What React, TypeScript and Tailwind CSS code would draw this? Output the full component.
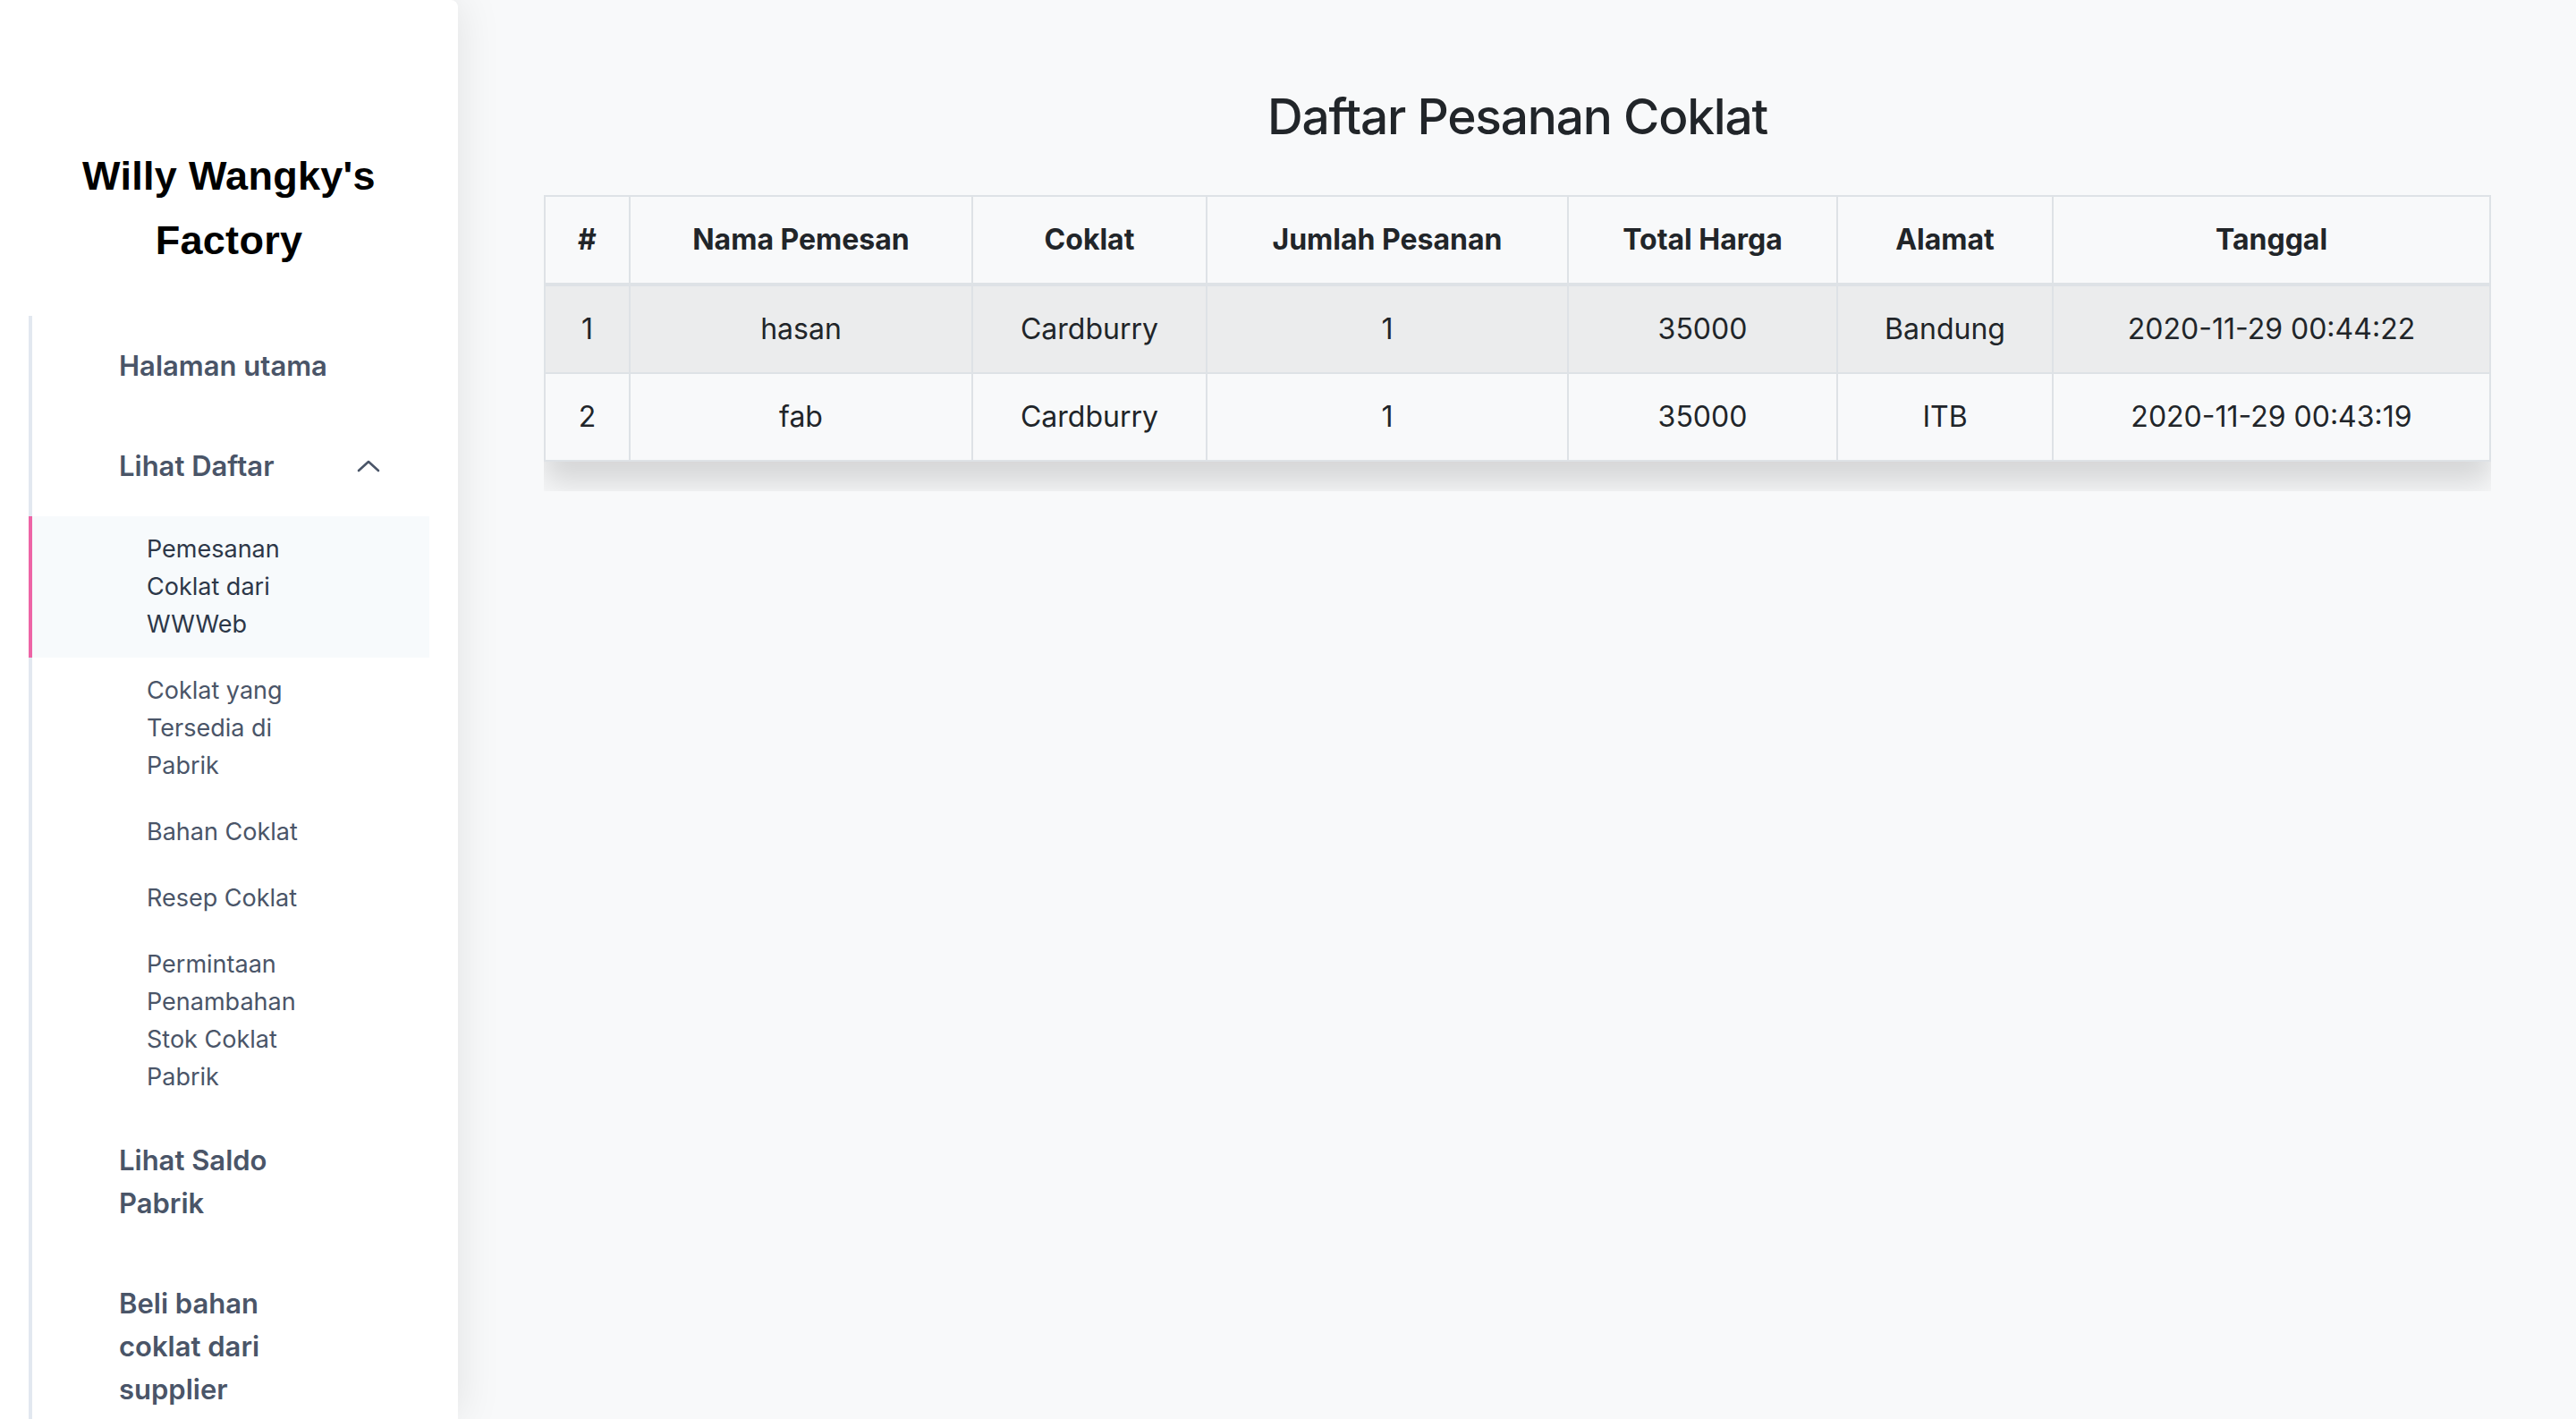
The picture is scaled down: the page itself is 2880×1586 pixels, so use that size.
import React from "react";

const NAV_SUB = [
  { label: "Pemesanan Coklat dari WWWeb", active: true },
  { label: "Coklat yang Tersedia di Pabrik", active: false },
  { label: "Bahan Coklat", active: false },
  { label: "Resep Coklat", active: false },
  { label: "Permintaan Penambahan Stok Coklat Pabrik", active: false },
];

const ORDERS = [
  { id: 1, nama: "hasan", coklat: "Cardburry", jumlah: 1, total: 35000, alamat: "Bandung", tanggal: "2020-11-29 00:44:22" },
  { id: 2, nama: "fab", coklat: "Cardburry", jumlah: 1, total: 35000, alamat: "ITB", tanggal: "2020-11-29 00:43:19" },
];

const HEADERS = [
  { label: "#", w: "w-[95px]" },
  { label: "Nama Pemesan", w: "w-[383px]" },
  { label: "Coklat", w: "w-[262px]" },
  { label: "Jumlah Pesanan", w: "w-[404px]" },
  { label: "Total Harga", w: "w-[301px]" },
  { label: "Alamat", w: "w-[241px]" },
  { label: "Tanggal", w: "w-[489px]" },
];

function ChevronUp() {
  return (
    <svg width="26" height="14" viewBox="0 0 26 14" fill="none">
      <polyline
        points="2,12 13,2 24,12"
        stroke="#4a5568"
        strokeWidth="2.6"
        strokeLinecap="round"
        strokeLinejoin="round"
      />
    </svg>
  );
}

function Sidebar() {
  return (
    <aside className="w-[512px] shrink-0 bg-white rounded-tr-lg shadow-[0_0_50px_rgba(0,0,0,0.1)] relative z-10 pt-[161px] px-[32px] font-['Inter',sans-serif]">
      <h1 className="text-center font-['Liberation_Sans',Arial,sans-serif] font-bold text-[45px] leading-[72px] text-black tracking-[0.3px] mb-[48px]">
        Willy Wangky's Factory
      </h1>

      <ul>
        <li className="border-l-4 border-[#e2e8f0] pl-[97px] py-8">
          <span className="block w-[240px] text-[31px] leading-[48px] font-semibold text-[#4a5568]">
            Halaman utama
          </span>
        </li>
        <li className="border-l-4 border-[#e2e8f0] pl-[97px] pr-[55px] py-8 flex items-center justify-between">
          <span className="block w-[240px] text-[31px] leading-[48px] font-semibold text-[#4a5568]">
            Lihat Daftar
          </span>
          <ChevronUp />
        </li>
        {NAV_SUB.map((item) => (
          <li
            key={item.label}
            className={`border-l-4 pl-[128px] py-4 ${
              item.active ? "border-[#ed64a6] bg-[#f7fafc]" : "border-[#e2e8f0]"
            }`}
          >
            <span
              className={`block w-[186px] text-[27px] leading-[42px] ${
                item.active ? "text-[#2d3748]" : "text-[#4a5568]"
              }`}
            >
              {item.label}
            </span>
          </li>
        ))}
        <li className="border-l-4 border-[#e2e8f0] pl-[97px] py-8">
          <span className="block w-[240px] text-[31px] leading-[48px] font-semibold text-[#4a5568]">
            Lihat Saldo Pabrik
          </span>
        </li>
        <li className="border-l-4 border-[#e2e8f0] pl-[97px] py-8">
          <span className="block w-[240px] text-[31px] leading-[48px] font-semibold text-[#4a5568]">
            Beli bahan coklat dari supplier
          </span>
        </li>
      </ul>
    </aside>
  );
}

export default function App() {
  return (
    <div className="flex h-screen overflow-hidden bg-[#f8f9fa]">
      <Sidebar />

      <main className="flex-1 px-[96px] pt-[96px] font-['Inter',sans-serif] text-[#212529]">
        <h2 className="text-center text-[55px] leading-[68px] font-medium tracking-[-1.2px] mb-[54px]">
          Daftar Pesanan Coklat
        </h2>

        <div className="overflow-hidden pb-[33px]">
          <table className="w-full table-fixed border-collapse text-[32px] leading-[48px] shadow-[0_24px_32px_rgba(0,0,0,0.14)] bg-[#f8f9fa]">
            <thead>
              <tr>
                {HEADERS.map((h) => (
                  <th
                    key={h.label}
                    className={`${h.w} border-2 border-b-4 border-[#dee2e6] py-6 px-6 text-center font-bold`}
                  >
                    {h.label}
                  </th>
                ))}
              </tr>
            </thead>
            <tbody>
              {ORDERS.map((o, i) => (
                <tr key={o.id} className={i % 2 === 0 ? "bg-[#ebeced]" : "bg-[#f8f9fa]"}>
                  <td className="border-2 border-[#dee2e6] py-6 px-6 text-center">{o.id}</td>
                  <td className="border-2 border-[#dee2e6] py-6 px-6 text-center">{o.nama}</td>
                  <td className="border-2 border-[#dee2e6] py-6 px-6 text-center">{o.coklat}</td>
                  <td className="border-2 border-[#dee2e6] py-6 px-6 text-center">{o.jumlah}</td>
                  <td className="border-2 border-[#dee2e6] py-6 px-6 text-center">{o.total}</td>
                  <td className="border-2 border-[#dee2e6] py-6 px-6 text-center">{o.alamat}</td>
                  <td className="border-2 border-[#dee2e6] py-6 px-6 text-center">{o.tanggal}</td>
                </tr>
              ))}
            </tbody>
          </table>
        </div>
      </main>
    </div>
  );
}
